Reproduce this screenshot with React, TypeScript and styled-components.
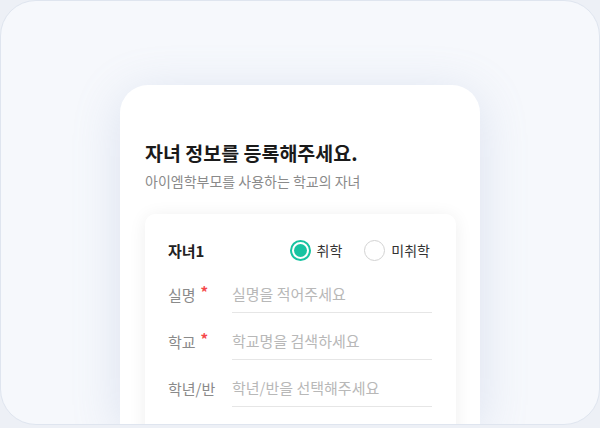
import React from "react";
import styled, { createGlobalStyle } from "styled-components";

const GlobalStyle = createGlobalStyle`
  html, body {
    margin: 0;
    padding: 0;
    background: #edf0f6;
  }
  body {
    font-family: "Noto Sans CJK KR", "Noto Sans", sans-serif;
  }
`;

const Frame = styled.div`
  box-sizing: border-box;
  width: 600px;
  height: 425px;
  border: 1px solid #dfe5ef;
  border-radius: 36px;
  background: #f6f8fc;
  overflow: hidden;
  display: flex;
  justify-content: center;
  padding-top: 84px;
`;

const Phone = styled.div`
  box-sizing: border-box;
  width: 360px;
  background: #ffffff;
  border-radius: 28px 28px 0 0;
  padding: 54px 24px 0 25px;
  box-shadow: 0 8px 48px rgba(140, 160, 200, 0.24);
`;

const Title = styled.h1`
  margin: 0;
  font-size: 19.5px;
  line-height: 28px;
  font-weight: 700;
  color: #1a1a1a;
`;

const Subtitle = styled.p`
  margin: 4px 0 0;
  font-size: 14px;
  line-height: 20px;
  color: #8a8a8a;
`;

const ChildCard = styled.div`
  margin-top: 23px;
  background: #ffffff;
  border-radius: 10px;
  padding: 24px 24px 20px 23px;
  height: 260px;
  box-shadow: 0 2px 18px rgba(0, 0, 0, 0.07);
`;

const CardHeader = styled.div`
  display: flex;
  align-items: center;
  justify-content: space-between;
  height: 24px;
  padding-right: 2px;
`;

const ChildName = styled.span`
  font-size: 15px;
  font-weight: 700;
  color: #222222;
`;

const RadioGroup = styled.div`
  display: flex;
  align-items: center;
  gap: 22px;
`;

const RadioOption = styled.label`
  display: flex;
  align-items: center;
  gap: 6px;
  font-size: 14px;
  color: #333333;
`;

const RadioCircle = styled.span<{ $checked?: boolean }>`
  box-sizing: border-box;
  width: 21px;
  height: 21px;
  border-radius: 50%;
  border: ${(p) => (p.$checked ? "2px solid #17c3a1" : "1.5px solid #d2d2d2")};
  display: flex;
  align-items: center;
  justify-content: center;
  &::after {
    content: "";
    display: ${(p) => (p.$checked ? "block" : "none")};
    width: 13px;
    height: 13px;
    border-radius: 50%;
    background: #17c3a1;
  }
`;

const Fields = styled.div`
  margin-top: 13px;
  display: flex;
  flex-direction: column;
  gap: 9px;
`;

const FieldRow = styled.div`
  display: flex;
  align-items: stretch;
  height: 38px;
`;

const FieldLabel = styled.div`
  width: 64px;
  flex-shrink: 0;
  display: flex;
  align-items: center;
  font-size: 15px;
  color: #8a8a8a;
`;

const Required = styled.span`
  color: #f5484b;
  margin-left: 5px;
  font-size: 15px;
  font-weight: 700;
  position: relative;
  top: -3px;
`;

const FieldInput = styled.div`
  flex: 1;
  display: flex;
  align-items: center;
  border-bottom: 1px solid #e6e6e6;
  font-size: 15px;
  color: #b8b8b8;
`;

const fields = [
  { label: "실명", required: true, placeholder: "실명을 적어주세요" },
  { label: "학교", required: true, placeholder: "학교명을 검색하세요" },
  { label: "학년/반", required: false, placeholder: "학년/반을 선택해주세요" },
];

export default function App() {
  return (
    <>
      <GlobalStyle />
      <Frame>
        <Phone>
          <Title>자녀 정보를 등록해주세요.</Title>
          <Subtitle>아이엠학부모를 사용하는 학교의 자녀</Subtitle>
          <ChildCard>
            <CardHeader>
              <ChildName>자녀1</ChildName>
              <RadioGroup>
                <RadioOption>
                  <RadioCircle $checked />
                  취학
                </RadioOption>
                <RadioOption>
                  <RadioCircle />
                  미취학
                </RadioOption>
              </RadioGroup>
            </CardHeader>
            <Fields>
              {fields.map((f) => (
                <FieldRow key={f.label}>
                  <FieldLabel>
                    {f.label}
                    {f.required && <Required>*</Required>}
                  </FieldLabel>
                  <FieldInput>{f.placeholder}</FieldInput>
                </FieldRow>
              ))}
            </Fields>
          </ChildCard>
        </Phone>
      </Frame>
    </>
  );
}
